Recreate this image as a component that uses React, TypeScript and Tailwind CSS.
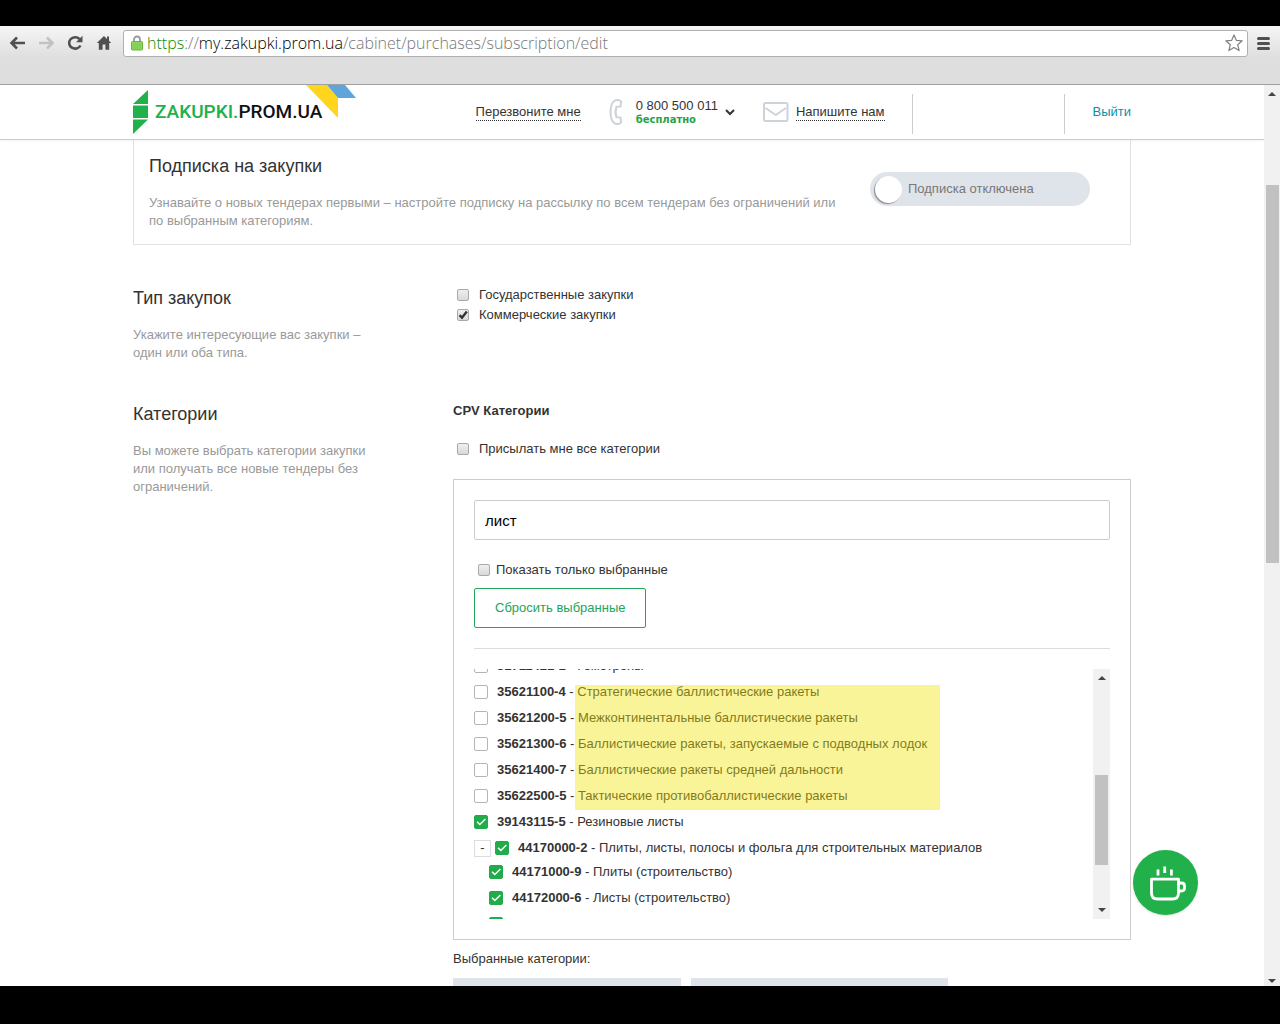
import { useState, type ReactNode } from 'react';

const categories = [
  { code: '35621100-4', name: 'Стратегические баллистические ракеты' },
  { code: '35621200-5', name: 'Межконтинентальные баллистические ракеты' },
  { code: '35621300-6', name: 'Баллистические ракеты, запускаемые с подводных лодок' },
  { code: '35621400-7', name: 'Баллистические ракеты средней дальности' },
  { code: '35622500-5', name: 'Тактические противобаллистические ракеты' },
];

function NativeCheckbox({ label, checked = false, gap }: { label: string; checked?: boolean; gap: string }) {
  const [on, setOn] = useState(checked);
  return (
    <label className={`flex h-5 items-center pl-1 ${gap}`}>
      <span className="grid size-3 shrink-0">
        <input
          type="checkbox"
          checked={on}
          onChange={() => setOn(!on)}
          className="col-start-1 row-start-1 size-3 appearance-none rounded-xs border border-[#a9a9a9] bg-linear-to-b from-[#efefef] to-[#d9d9d9]"
        />
        {on && (
          <svg viewBox="0 0 12 12" className="pointer-events-none col-start-1 row-start-1 size-3" fill="none" stroke="#333" strokeWidth="2.4">
            <path d="M2.5 6.2 5 8.7 9.8 2.6" />
          </svg>
        )}
      </span>
      <span>{label}</span>
    </label>
  );
}

function Category({ code, name, checked = false }: { code: string; name: string; checked?: boolean }) {
  const [on, setOn] = useState(checked);
  return (
    <label className="flex h-[26px] items-center gap-[9px]">
      <span className="grid size-[14px] shrink-0">
        <input
          type="checkbox"
          checked={on}
          onChange={() => setOn(!on)}
          className="col-start-1 row-start-1 size-[14px] appearance-none rounded-xs border border-[#b5b5b5] bg-white checked:border-[#22ab4b] checked:bg-[#22ab4b]"
        />
        {on && (
          <svg viewBox="0 0 14 14" className="pointer-events-none col-start-1 row-start-1 size-[14px]" fill="none" stroke="#fff" strokeWidth="1.4">
            <path d="M3 6.8 5.8 9.6 11.4 4" />
          </svg>
        )}
      </span>
      <span className="whitespace-nowrap">
        <b>{code}</b> - {name}
      </span>
    </label>
  );
}

function Arrow({ down = false }: { down?: boolean }) {
  return (
    <svg viewBox="0 0 8 4" className="h-1 w-2" fill="#444">
      <path d={down ? 'M0 0h8L4 4z' : 'M0 4h8L4 0z'} />
    </svg>
  );
}

function Section({ title, text, children }: { title: string; text: string; children: ReactNode }) {
  return (
    <section className="flex">
      <div className="w-80 shrink-0">
        <h2 className="text-lg leading-6 font-medium">{title}</h2>
        <p className="mt-4 w-60 leading-[18px] text-[#999]">{text}</p>
      </div>
      <div className="min-w-0 flex-1">{children}</div>
    </section>
  );
}

function BrowserBar() {
  return (
    <div className="shrink-0 border-b border-[#a0a0a0] bg-[#dedede]">
      <div className="flex h-8 items-center bg-linear-to-b from-[#f6f6f6] to-[#dedede] pt-[2px] pl-[9px] pr-[10px]">
        <nav className="flex items-center gap-3">
          <button aria-label="Назад">
            <svg viewBox="0 0 17 16" className="h-4 w-[17px]" fill="none" stroke="#505050" strokeWidth="2.6">
              <path d="M16 8H3M8 2.5 2.5 8 8 13.5" />
            </svg>
          </button>
          <button aria-label="Вперёд">
            <svg viewBox="0 0 17 16" className="h-4 w-[17px]" fill="none" stroke="#c2c2c2" strokeWidth="2.6">
              <path d="M1 8h13M9 2.5 14.5 8 9 13.5" />
            </svg>
          </button>
          <button aria-label="Обновить">
            <svg viewBox="0 0 17 16" className="h-4 w-[17px]">
              <path d="M13.5 10.5A6 5.7 0 1 1 12.5 4" fill="none" stroke="#505050" strokeWidth="2.6" />
              <path d="M15.5.8v6.4H9z" fill="#505050" />
            </svg>
          </button>
          <button aria-label="Домой">
            <svg viewBox="0 0 16 16" className="size-4" fill="#505050">
              <path d="M8 1 .8 8h2v6.800h3.800V9.500h2.800v5.300h3.800V8h2L13 5.800V1.600h-2v2.300z" />
            </svg>
          </button>
        </nav>
        <div className="ml-[11px] flex h-[27px] flex-1 items-center rounded-[3px] border border-[#b0b0b0] bg-white pl-[7px] pr-1">
          <svg viewBox="0 0 12 16" className="h-4 w-3">
            <path d="M3 8V4.5a3 3 0 0 1 6 0V8" fill="none" stroke="#9a9a9a" strokeWidth="1.8" />
            <rect x=".5" y="6.5" width="11" height="8.5" rx="1" fill="#8fd860" stroke="#62b13c" />
            <path d="M2 9h8M2 11h8M2 13h8" stroke="#76c44b" strokeWidth=".8" />
          </svg>
          <span className="ml-1 font-['Open_Sans'] text-base leading-5 font-light whitespace-nowrap text-[#777]">
            <span className="text-[#0b8a0b]">https</span>://<span className="text-black">my.zakupki.prom.ua</span>/cabinet/purchases/subscription/edit
          </span>
          <button aria-label="В закладки" className="ml-auto">
            <svg viewBox="0 0 18 18" className="size-[18px]" fill="#fff" stroke="#808080" strokeWidth="1.2" strokeLinejoin="round">
              <path d="m9 1 2.3 5.3 5.9.5-4.5 3.9 1.4 5.9L9 13.5l-5.1 3.1 1.4-5.9L.8 6.8l5.900-.5z" />
            </svg>
          </button>
        </div>
        <button aria-label="Меню" className="ml-[9px] flex flex-col gap-[2px]">
          <span className="h-[3px] w-[13px] rounded-full bg-[#505050]" />
          <span className="h-[3px] w-[13px] rounded-full bg-[#505050]" />
          <span className="h-[3px] w-[13px] rounded-full bg-[#505050]" />
        </button>
      </div>
      <div className="h-[26px]" />
    </div>
  );
}

function SiteHeader() {
  return (
    <header className="relative border-b border-[#ccc] bg-white shadow-xs">
      <div className="mx-auto flex h-[54px] max-w-[998px] items-center">
        <a href="#" aria-label="Zakupki.Prom.ua" className="flex h-full items-center">
          <svg viewBox="0 0 15 44" className="h-11 w-[15px]" fill="#22b04b">
            <path d="M15 0v14H0zM0 15.5h15V28H0zM0 29.5h15L0 44z" />
          </svg>
          <span className="ml-[7px] font-[Roboto] text-[19px] font-medium text-[#111]">
            <span className="text-[#22b04b]">ZAKUPKI.</span>PROM.UA
          </span>
          <svg viewBox="0 0 50 33" className="-ml-4 h-[33px] w-[50px] self-start">
            <path d="M0 0h21l11 13v20z" fill="#ffd51e" />
            <path d="M21 0h18l11 13H32z" fill="#5ea5dc" />
          </svg>
        </a>
        <div className="ml-auto flex h-full items-center">
          <a href="#" className="border-b border-dotted border-[#333] leading-4">Перезвоните мне</a>
          <svg viewBox="0 0 14 28" className="ml-7 h-7 w-[14px]" fill="none" stroke="#ced3d9" strokeWidth="2" strokeLinejoin="round">
            <path d="M6 2.500C2.500 4.500 1.500 9 1.500 14S2.500 23.500 6 25.500Q8 26.500 10 25.800L12.200 24.500 11.500 19.500 7.500 19.200Q5.500 14 7.500 8.800L11.500 8.500 12.200 3.500 10 2.200Q8 1.500 6 2.500z" />
          </svg>
          <div className="ml-[13px]">
            <div className="leading-4">0 800 500 011</div>
            <div className="font-['DejaVu_Sans'] text-[10px] leading-3 font-bold text-[#22a548]">бесплатно</div>
          </div>
          <button aria-label="Другие телефоны" className="ml-[7px]">
            <svg viewBox="0 0 10 8" className="h-2 w-[10px]" fill="none" stroke="#333" strokeWidth="2">
              <path d="m1 2 4 4 4-4" />
            </svg>
          </button>
          <svg viewBox="0 0 26 20" className="ml-7 h-5 w-[26px]" fill="none" stroke="#ced3d9" strokeWidth="2" strokeLinejoin="round">
            <rect x="1" y="1" width="23.500" height="18" rx="1.500" />
            <path d="m2.500 6 10.300 7L23 6" />
          </svg>
          <a href="#" className="ml-[7px] border-b border-dotted border-[#333] leading-4">Напишите нам</a>
          <span className="mt-1 ml-[27px] h-10 w-px bg-[#ccc]" />
          <span className="mt-1 ml-[151px] h-10 w-px bg-[#ccc]" />
          <a href="#" className="ml-7 text-[#0a8fa8]">Выйти</a>
        </div>
      </div>
    </header>
  );
}

export default function App() {
  const [subscribed, setSubscribed] = useState(false);
  const [query, setQuery] = useState('лист');
  return (
    <div className="flex h-screen flex-col overflow-hidden bg-black pt-[26px] pb-[38px] font-['Liberation_Sans',sans-serif] text-[13px] text-[#333]">
      <BrowserBar />
      <div className="relative flex min-h-0 flex-1 bg-white">
        <div className="min-w-0 flex-1 overflow-hidden">
          <SiteHeader />
          <main className="mx-auto max-w-[998px]">
            <section className="flex items-start justify-between border border-t-0 border-[#e2e2e2] pt-[14px] pr-10 pb-[14px] pl-[15px]">
              <div className="w-[690px]">
                <h1 className="text-lg leading-6 font-medium">Подписка на закупки</h1>
                <p className="mt-4 leading-[18px] text-[#999]">
                  Узнавайте о новых тендерах первыми – настройте подписку на рассылку по всем тендерам без ограничений или
                  по выбранным категориям.
                </p>
              </div>
              <button
                role="switch"
                aria-checked={subscribed}
                onClick={() => setSubscribed(!subscribed)}
                className="mt-[18px] flex h-[34px] w-[220px] items-center gap-[6px] rounded-full bg-[#dfe4ea] pl-[5px] text-[#777]"
              >
                <span className="size-[27px] rounded-full bg-white shadow-[-1px_1px_1px_#888]" />
                Подписка отключена
              </button>
            </section>

            <div className="mt-[41px] flex flex-col gap-10">
              <Section title="Тип закупок" text="Укажите интересующие вас закупки – один или оба типа.">
                <div className="-mt-px">
                  <NativeCheckbox label="Государственные закупки" gap="gap-[10px]" />
                  <NativeCheckbox label="Коммерческие закупки" checked gap="gap-[10px]" />
                </div>
              </Section>

              <Section title="Категории" text="Вы можете выбрать категории закупки или получать все новые тендеры без ограничений.">
                <h3 className="leading-[18px] font-bold">CPV Категории</h3>
                <div className="mt-[19px]">
                  <NativeCheckbox label="Присылать мне все категории" gap="gap-[10px]" />
                </div>
                <div className="mt-5 border border-[#ccc] p-5">
                  <input
                    aria-label="Поиск категории"
                    value={query}
                    onChange={(e) => setQuery(e.target.value)}
                    className="block h-10 w-full rounded-xs border border-[#ccc] px-[10px] text-[15px] text-black"
                  />
                  <div className="mt-5">
                    <NativeCheckbox label="Показать только выбранные" gap="gap-[6px]" />
                  </div>
                  <button className="mt-2 h-10 rounded-xs border border-[#22a55a] px-5 text-[#22a55a]">Сбросить выбранные</button>
                  <hr className="my-5 border-[#ddd]" />
                  <div className="flex h-[250px]">
                    <div className="min-w-0 flex-1 overflow-hidden">
                      <div className="-mt-4">
                        <Category code="31711421-1" name="Гомотроны" />
                      </div>
                      <div className="relative">
                        {categories.map((c) => (
                          <Category key={c.code} {...c} />
                        ))}
                        <div className="pointer-events-none absolute top-[6px] left-[101px] h-[125px] w-[365px] bg-[#f3e400]/40" />
                      </div>
                      <Category code="39143115-5" name="Резиновые листы" checked />
                      <div className="flex items-center gap-1">
                        <button aria-label="Свернуть" className="flex size-[17px] items-center justify-center border border-[#ddd]">
                          -
                        </button>
                        <Category code="44170000-2" name="Плиты, листы, полосы и фольга для строительных материалов" checked />
                      </div>
                      <div className="-mt-[2px] pl-[15px]">
                        <Category code="44171000-9" name="Плиты (строительство)" checked />
                        <Category code="44172000-6" name="Листы (строительство)" checked />
                        <Category code="44173000-3" name="Полосы" checked />
                      </div>
                    </div>
                    <div className="flex w-[17px] flex-col items-center bg-[#f1f1f1] py-[7px]">
                      <Arrow />
                      <div className="mt-[95px] h-[90px] w-[13px] bg-[#c1c1c1]" />
                      <div className="mt-auto">
                        <Arrow down />
                      </div>
                    </div>
                  </div>
                </div>
                <p className="mt-[10px] leading-[18px]">Выбранные категории:</p>
                <div className="mt-[10px] flex gap-[10px]">
                  <div className="h-8 w-[228px] bg-[#dfe3ea]" />
                  <div className="h-8 w-[257px] bg-[#dfe3ea]" />
                </div>
              </Section>
            </div>
          </main>
        </div>

        <div className="flex w-4 shrink-0 flex-col items-center bg-[#f1f1f1] pt-[7px] pb-[3px]">
          <Arrow />
          <div className="mt-[89px] h-[378px] w-[13px] bg-[#c1c1c1]" />
          <div className="mt-auto">
            <Arrow down />
          </div>
        </div>

        <button
          aria-label="Помощь"
          className="absolute right-[82px] bottom-[71px] flex size-[65px] items-center justify-center rounded-full bg-[#22b04b] shadow-sm"
        >
          <svg viewBox="0 0 36 36" className="ml-1 size-9" fill="none" stroke="#fff" strokeWidth="2.800">
            <path d="M1.500 14.200h27V28q0 6-6 6h-15q-6 0-6-6z" strokeLinejoin="round" />
            <path d="M28.500 18h3q3 0 3 3v2q0 3-3 3h-3" />
            <path d="M8 4.500v6M14.700 1.500v6.500M21.400 4.500v6" />
          </svg>
        </button>
      </div>
    </div>
  );
}
